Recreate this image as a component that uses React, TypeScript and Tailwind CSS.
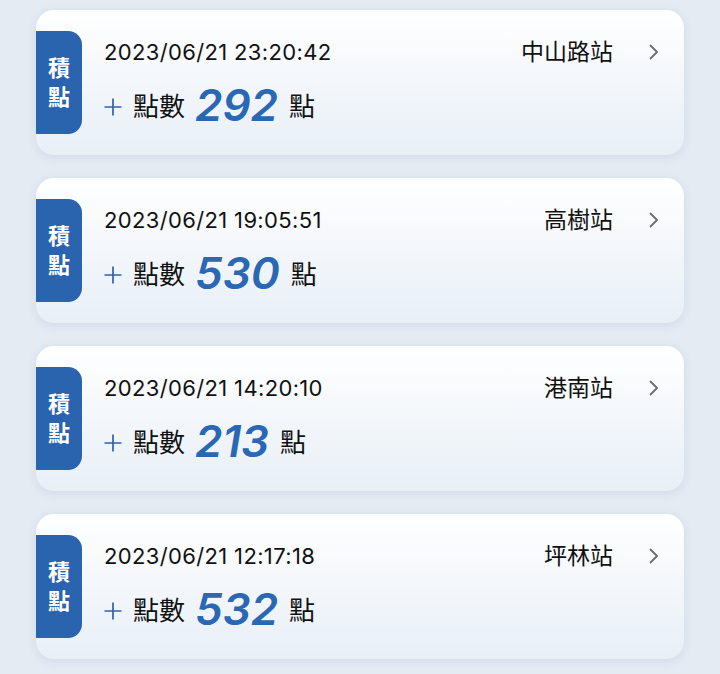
import React from "react";

type Record = {
  time: string;
  station: string;
  points: number;
};

const RECORDS: Record[] = [
  { time: "2023/06/21 23:20:42", station: "中山路站", points: 292 },
  { time: "2023/06/21 19:05:51", station: "高樹站", points: 530 },
  { time: "2023/06/21 14:20:10", station: "港南站", points: 213 },
  { time: "2023/06/21 12:17:18", station: "坪林站", points: 532 },
];

const FONT = {
  fontFamily:
    'Inter, "Liberation Sans", "Noto Sans CJK TC", "Noto Sans CJK SC", sans-serif',
};

function ChevronRight() {
  return (
    <svg width="10" height="16" viewBox="0 0 10 16" fill="none">
      <path
        d="M1.5 1.5L8 8L1.5 14.5"
        stroke="#6b6d70"
        strokeWidth="1.8"
        strokeLinecap="round"
        strokeLinejoin="round"
      />
    </svg>
  );
}

function PlusIcon() {
  return (
    <svg width="18" height="18" viewBox="0 0 18 18" fill="none">
      <path d="M9 0.5V17.5M0.5 9H17.5" stroke="#2a63ae" strokeWidth="1.7" />
    </svg>
  );
}

function RecordCard({ record }: { record: Record }) {
  return (
    <div className="h-[145px] shrink-0 rounded-[18px] bg-gradient-to-b from-white to-[#e8eff7] shadow-[0_2px_10px_rgba(120,140,170,0.18)] flex items-center">
      <div className="w-[46px] h-[103px] shrink-0 bg-[#2a63ae] rounded-r-[14px] flex flex-col items-center justify-center text-white text-[22px] leading-[29px] font-semibold">
        <span>積</span>
        <span>點</span>
      </div>

      <div className="flex-1 self-stretch ml-[22px] pr-[25px] pt-[28px]">
        <div className="flex items-center h-[28px]">
          <span className="text-[22px] text-[#111] tracking-[0.35px]">
            {record.time}
          </span>
          <span className="ml-auto text-[23px] text-[#111]">
            {record.station}
          </span>
          <span className="ml-[36px] flex items-center">
            <ChevronRight />
          </span>
        </div>

        <div className="flex items-center mt-[11px] h-[56px]">
          <span className="mr-[11px] mt-[4px] flex items-center">
            <PlusIcon />
          </span>
          <span className="text-[26px] text-[#111] mt-[3px]">點數</span>
          <span className="ml-[10px] mr-[11px] text-[44px] leading-[50px] font-semibold italic text-[#2a67b5]">
            {record.points}
          </span>
          <span className="text-[26px] text-[#111] mt-[3px]">點</span>
        </div>
      </div>
    </div>
  );
}

export default function App() {
  return (
    <div
      className="min-h-screen bg-[#e4ebf3] px-9 pt-[10px] pb-6 flex flex-col gap-[23px]"
      style={FONT}
    >
      {RECORDS.map((r) => (
        <RecordCard key={r.time} record={r} />
      ))}
    </div>
  );
}
